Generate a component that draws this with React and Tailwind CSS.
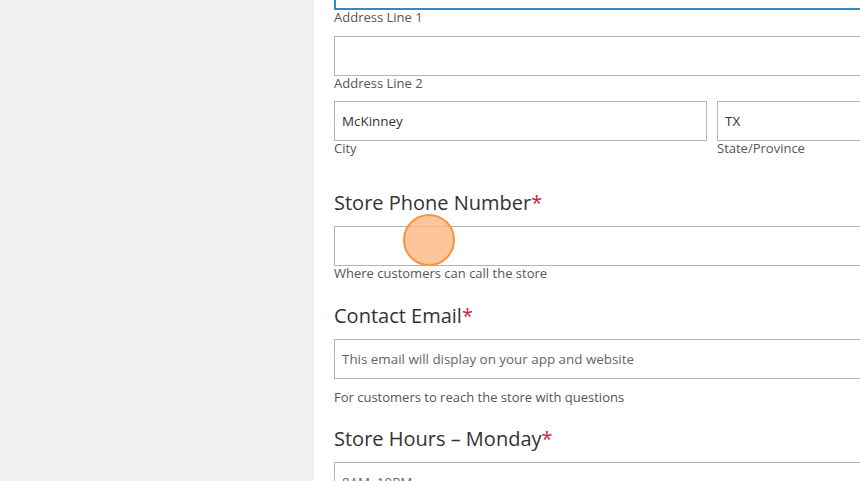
import React from 'react'

const font = { fontFamily: '"Open Sans", "Noto Sans", sans-serif' }

function Field({ value, placeholder, className = '' }) {
  return (
    <div
      className={`h-10 border border-[#b4b4b4] bg-white flex items-center px-[7px] text-[13.4px] ${className}`}
    >
      {value ? (
        <span className="text-[#333]">{value}</span>
      ) : (
        <span className="text-[#666]">{placeholder}</span>
      )}
    </div>
  )
}

function Label({ children, className = '' }) {
  return <p className={`text-[13px] leading-[14px] text-[#555] ${className}`}>{children}</p>
}

function Heading({ children, className = '' }) {
  return (
    <h2 className={`text-[20px] leading-6 text-[#333] ${className}`}>
      {children}
      <span className="text-[#c8243a]">*</span>
    </h2>
  )
}

export default function App() {
  return (
    <div className="flex h-[481px] w-[860px] overflow-hidden bg-white" style={font}>
      <aside className="w-[314px] shrink-0 bg-[#eef0f2]" />
      <main className="flex-1 pl-5 overflow-hidden">
        <div className="w-[760px] -mt-[30px]">
          <div className="h-10 border-2 border-[#2e8bc9] bg-white" />
          <Label>Address Line 1</Label>

          <Field className="mt-[12px]" />
          <Label>Address Line 2</Label>

          <div className="flex gap-[10px] mt-[11px]">
            <div className="w-[373px]">
              <Field value="McKinney" />
              <Label>City</Label>
            </div>
            <div className="flex-1">
              <Field value="TX" />
              <Label>State/Province</Label>
            </div>
          </div>

          <Heading className="mt-[36px]">Store Phone Number</Heading>
          <Field className="mt-[11px]" />
          <Label>Where customers can call the store</Label>

          <Heading className="mt-[24px]">Contact Email</Heading>
          <Field className="mt-[11px]" placeholder="This email will display on your app and website" />
          <Label className="mt-[11px]">For customers to reach the store with questions</Label>

          <Heading className="mt-[23px]">Store Hours – Monday</Heading>
          <Field className="mt-[11px]" placeholder="8AM–10PM" />
        </div>
      </main>
      <div className="absolute left-[403px] top-[214px] h-[52px] w-[52px] rounded-full border-2 border-[#f7953f] bg-[#fcb781]/80" />
    </div>
  )
}
